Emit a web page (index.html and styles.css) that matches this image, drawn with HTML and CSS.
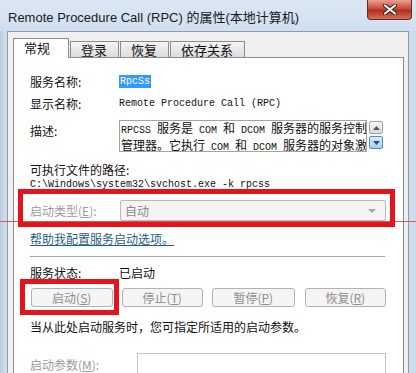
FILE: index.html
```html
<!DOCTYPE html>
<html lang="zh-CN">
<head>
  <meta charset="UTF-8">
  <title>Remote Procedure Call (RPC) 的属性</title>
  <link rel="stylesheet" href="styles.css">
</head>
<body>
  <div class="window">
    <div class="titlebar">
      <span class="title">Remote Procedure Call (RPC) 的属性(本地计算机)</span>
      <span class="close">
        <svg width="14" height="11" viewBox="0 0 14 11"><path d="M2 1.5 L12 9.5 M12 1.5 L2 9.5" stroke="#3a1a1a" stroke-width="4" stroke-linecap="round"/><path d="M2 1.5 L12 9.5 M12 1.5 L2 9.5" stroke="#fff" stroke-width="2.2" stroke-linecap="round"/></svg>
      </span>
    </div>
    <div class="dialog">
      <div class="tabs">
        <div class="tab active">常规</div>
        <div class="tab">登录</div>
        <div class="tab">恢复</div>
        <div class="tab">依存关系</div>
      </div>
      <div class="panel">
        <div class="row r1">
          <span class="label">服务名称:</span>
          <span class="mono"><span class="sel">RpcSs</span></span>
        </div>
        <div class="row">
          <span class="label">显示名称:</span>
          <span class="mono">Remote Procedure Call (RPC)</span>
        </div>
        <div class="row desc-row">
          <span class="label">描述:</span>
          <div class="desc">
            <div class="desc-text">
              <div><span class="lat">RPCSS </span>服务是<span class="lat"> COM </span>和<span class="lat"> DCOM </span>服务器的服务控制</div>
              <div>管理器。它执行<span class="lat"> COM </span>和<span class="lat"> DCOM </span>服务器的对象激</div>
            </div>
            <div class="scroll">
              <span class="sbtn"><svg width="7" height="4" viewBox="0 0 7 4"><path d="M0 4 L3.5 0 L7 4Z" fill="#555"/></svg></span>
              <span class="sbtn hot"><svg width="7" height="4" viewBox="0 0 7 4"><path d="M0 0 L3.5 4 L7 0Z" fill="#2b4f7a"/></svg></span>
            </div>
          </div>
        </div>
        <div class="exe-label">可执行文件的路径:</div>
        <div class="mono path">C:\Windows\system32\svchost.exe -k rpcss</div>
        <div class="row startup">
          <span class="label grey">启动类型(<u>E</u>):</span>
          <div class="combo">
            <span>自动</span>
            <svg width="8" height="4" viewBox="0 0 8 4"><path d="M0 0 L4 4 L8 0Z" fill="#a8a8a8"/></svg>
          </div>
        </div>
        <a class="link">帮助我配置服务启动选项。</a>
        <div class="sep"></div>
        <div class="row status">
          <span class="label">服务状态:</span>
          <span>已启动</span>
        </div>
        <div class="buttons">
          <span class="btn">启动(<u>S</u>)</span>
          <span class="btn">停止(<u>T</u>)</span>
          <span class="btn">暂停(<u>P</u>)</span>
          <span class="btn">恢复(<u>R</u>)</span>
        </div>
        <div class="hint">当从此处启动服务时，您可指定所适用的启动参数。</div>
        <div class="row params">
          <span class="label grey">启动参数(<u>M</u>):</span>
          <div class="input"></div>
        </div>
      </div>
    </div>
  </div>
  <div class="mark-line"></div>
  <div class="mark box-startup"></div>
  <div class="mark box-start"></div>
</body>
</html>
```

FILE: styles.css
```css
body {
  margin: 0;
  width: 416px;
  height: 373px;
  overflow: hidden;
  position: relative;
  font-family: "Noto Sans CJK SC", sans-serif;
  font-size: 12px;
  color: #111;
}
.window {
  height: 373px;
  background: linear-gradient(to right, #bccbdb, #cfdcea 5px, #d8e4f0 50%, #cfdcea);
  padding: 0 7px 0 7px;
  box-sizing: border-box;
}
.titlebar {
  height: 31px;
  display: flex;
  align-items: flex-start;
  justify-content: space-between;
  background: linear-gradient(to bottom, #dbe7f3, #cfdff0);
  margin: 0 -7px;
  padding: 0 4px 0 8px;
}
.title {
  font-family: "Liberation Sans", "Noto Sans CJK SC", sans-serif;
  font-size: 13px;
  color: #1b1b1b;
  margin-top: 7px;
}
.close {
  width: 45px;
  height: 20px;
  display: flex;
  align-items: center;
  justify-content: center;
  background: linear-gradient(to bottom, #e8a193, #c74a3a 45%, #b22d1e 55%, #d0705a);
  border: 1px solid #6d2a22;
  border-top: none;
  border-radius: 0 0 4px 4px;
  box-sizing: border-box;
}
.dialog {
  height: 342px;
  background: #f0f0f0;
  border: 1px solid #8e9aa8;
  border-bottom: none;
  padding: 5px 4px 0 5px;
  box-sizing: border-box;
}
.tabs {
  display: flex;
  align-items: flex-end;
  height: 20px;
  padding-left: 0;
}
.tab {
  height: 15px;
  line-height: 15px;
  padding: 0 11px 0 10px;
  border: 1px solid #8c8c8c;
  border-bottom: none;
  margin-right: 1px;
  background: linear-gradient(to bottom, #f4f4f4, #dcdcdc);
  font-size: 13px;
  color: #111;
}
.tab.active {
  height: 19px;
  line-height: 17px;
  background: #fff;
  padding: 0 18px 0 10px;
  position: relative;
  z-index: 1;
  margin-bottom: -1px;
}
.panel {
  background: #fff;
  border: 1px solid #898c95;
  height: 320px;
  padding: 12px 17px 0 16px;
  box-sizing: border-box;
}
.row {
  display: flex;
  align-items: center;
  height: 22px;
}
.label {
  width: 89px;
  flex: none;
}
.grey {
  color: #9a9a9a;
}
.mono {
  font-family: "Liberation Mono", monospace;
  font-size: 10px;
}
.sel {
  background: #3399ff;
  color: #fff;
  padding: 1px 1px;
}
.desc-row {
  height: auto;
  align-items: flex-start;
  margin-top: 6px;
}
.desc-row .label {
  line-height: 22px;
}
.desc {
  display: flex;
  gap: 2px;
}
.desc-text {
  width: 248px;
  height: 32px;
  border: 1px solid #a4a4a4;
  box-sizing: border-box;
  padding: 0 1px;
  font-size: 12px;
  line-height: 14px;
  white-space: nowrap;
  overflow: hidden;
  font-family: "Noto Sans CJK SC", sans-serif;
}
.lat {
  font-family: "Liberation Mono", monospace;
  font-size: 10px;
}
.scroll {
  display: flex;
  flex-direction: column;
  gap: 2px;
  padding-top: 1px;
}
.sbtn {
  width: 14px;
  height: 13px;
  border: 1px solid #9aa3ad;
  border-radius: 2px;
  box-sizing: border-box;
  background: linear-gradient(to bottom, #f6f6f6, #dcdcdc);
  display: flex;
  align-items: center;
  justify-content: center;
}
.sbtn.hot {
  background: linear-gradient(to bottom, #d9ecfb, #a6cdef);
  border-color: #5b8ab5;
}
.exe-label {
  margin-top: 10px;
  line-height: 16px;
}
.path {
  line-height: 14px;
}
.startup {
  margin-top: 8px;
  height: 21px;
}
.combo {
  width: 267px;
  height: 21px;
  box-sizing: border-box;
  border: 1px solid #b8b8b8;
  border-radius: 2px;
  background: #f4f4f4;
  color: #8a8a8a;
  display: flex;
  align-items: center;
  justify-content: space-between;
  padding: 0 9px 0 4px;
  margin-left: 1px;
}
.link {
  display: block;
  margin-top: 10px;
  line-height: 16px;
  color: #1f5f86;
  text-decoration: underline;
}
.sep {
  margin-top: 9px;
  height: 1px;
  background: #a8a8a8;
  width: 355px;
}
.status {
  margin-top: 7px;
  height: 16px;
}
.buttons {
  display: flex;
  gap: 9px;
  margin-top: 8px;
  padding-left: 1px;
}
.btn {
  width: 82px;
  height: 19px;
  box-sizing: border-box;
  border: 1px solid #b3b3b3;
  border-radius: 3px;
  background: #f4f4f4;
  color: #8d8d8d;
  display: flex;
  align-items: center;
  justify-content: center;
}
.buttons .btn:nth-child(3) {
  width: 83px;
}
.buttons .btn:nth-child(4) {
  margin-left: 1px;
}
.hint {
  margin-top: 12px;
  line-height: 16px;
}
.params {
  margin-top: 18px;
  height: 24px;
  align-items: flex-start;
}
.params .label {
  width: 107px;
  line-height: 24px;
}
.input {
  width: 249px;
  height: 30px;
  border: 1px solid #c4c4c4;
  box-sizing: border-box;
}
.mark-line {
  position: absolute;
  left: 0;
  top: 221px;
  width: 416px;
  height: 1px;
  background: #d65a5a;
}
.mark {
  position: absolute;
  border: 5px solid #e3141c;
  box-sizing: border-box;
}
.box-startup {
  left: 18px;
  top: 189px;
  width: 377px;
  height: 38px;
}
.box-start {
  left: 20px;
  top: 279px;
  width: 99px;
  height: 36px;
}
```
